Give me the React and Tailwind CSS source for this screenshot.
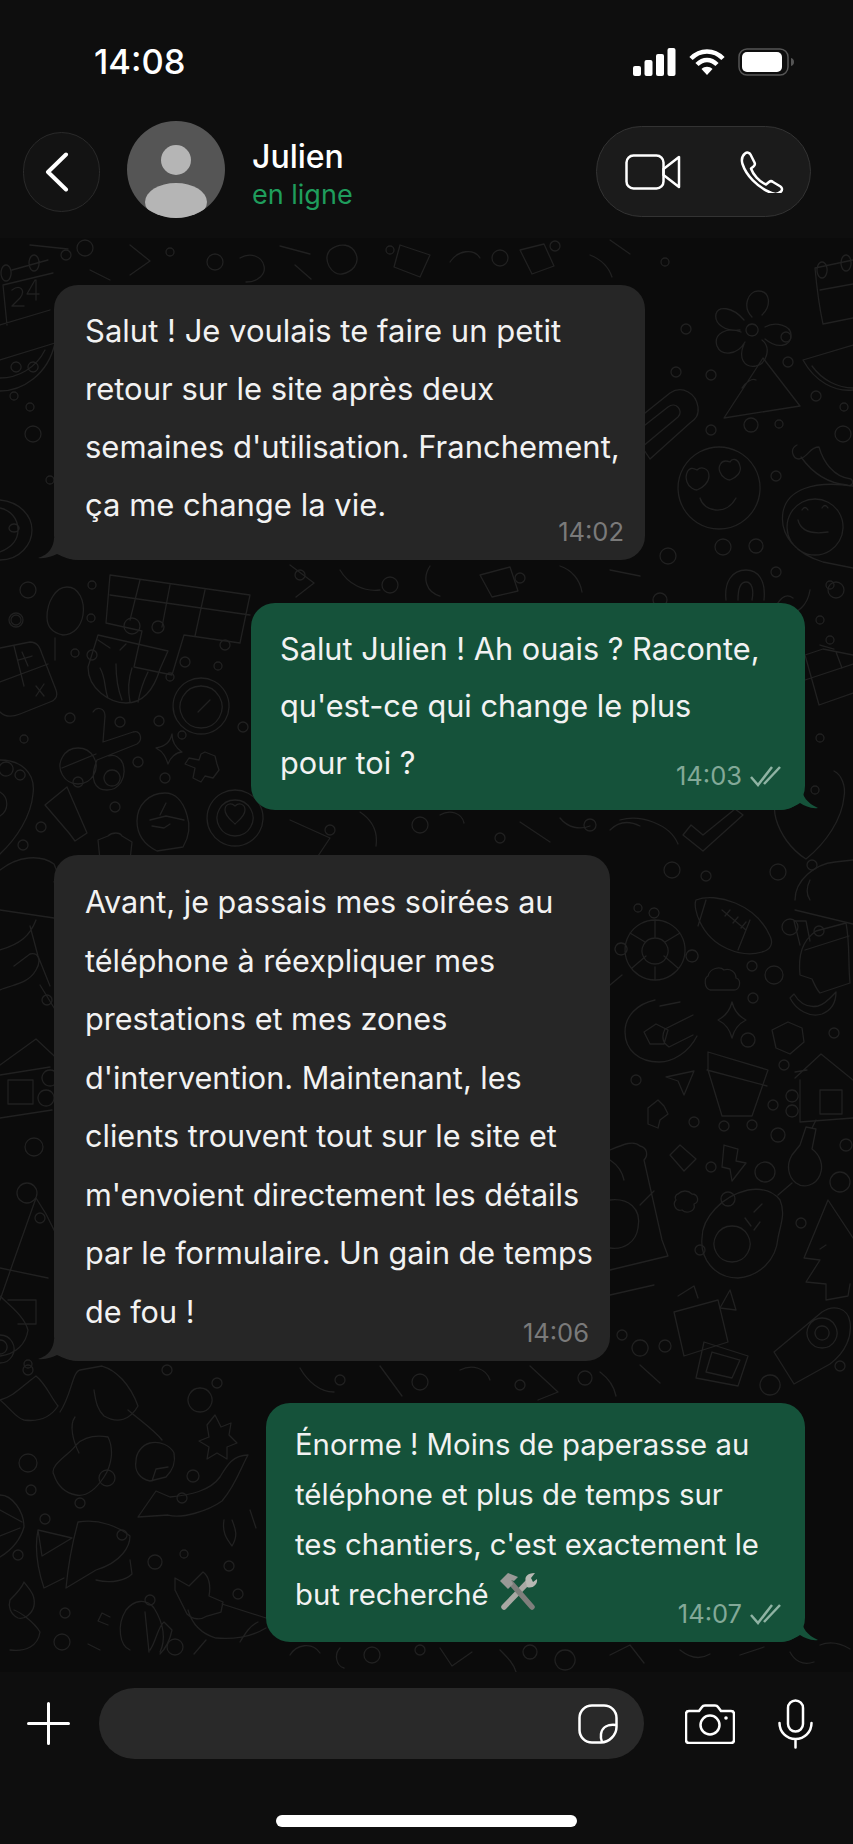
import React from 'react';

const font = "font-['Inter','Liberation_Sans',sans-serif]";

// little rings scattered between the doodles, page coordinates
const dots = [
    [66, 255, 5], [85, 248, 8], [170, 252, 4], [215, 262, 8], [390, 250, 4], [500, 258, 8], [555, 246, 5], [665, 262, 4],
    [686, 329, 5], [786, 337, 5], [676, 372, 5], [711, 375, 5], [788, 362, 5], [816, 396, 5], [844, 407, 4], [14, 396, 4], [30, 407, 4],
    [751, 425, 7], [779, 424, 4], [843, 434, 8], [711, 430, 5], [776, 476, 5], [33, 434, 8], [50, 480, 4],
    [723, 547, 8], [756, 546, 7], [776, 572, 5], [668, 556, 8], [660, 600, 7], [836, 590, 8], [820, 620, 4],
    [28, 590, 8], [16, 620, 5], [92, 585, 4], [91, 618, 4], [92, 655, 5], [132, 626, 8], [158, 627, 6], [225, 645, 5], [185, 662, 5], [218, 666, 4],
    [170, 677, 4], [16, 620, 7], [75, 653, 4], [24, 739, 4], [70, 718, 5], [120, 722, 5], [159, 721, 5], [138, 762, 5], [165, 778, 5], [243, 727, 5],
    [78, 782, 5], [41, 827, 5], [23, 845, 5], [115, 807, 5], [182, 735, 4], [830, 585, 4], [815, 790, 4], [812, 865, 5], [830, 640, 4], [820, 738, 4],
    [672, 870, 8], [706, 876, 5], [778, 872, 8], [638, 908, 4], [790, 927, 8], [819, 931, 5], [752, 966, 5], [774, 975, 9], [753, 998, 5], [748, 1040, 7], [834, 1033, 5], [784, 1065, 5],
    [636, 1080, 5], [773, 1105, 5], [694, 1122, 5], [724, 1126, 5], [752, 1125, 5], [778, 1135, 7], [846, 1145, 6], [711, 1167, 5], [765, 1172, 10], [840, 1182, 10],
    [728, 1199, 7], [700, 1250, 5], [801, 1223, 5], [622, 1335, 5], [665, 1346, 6], [840, 1366, 5], [47, 1000, 5], [34, 1147, 9], [27, 1193, 10], [40, 1218, 5], [28, 1370, 5],
    [28, 1364, 4], [167, 1370, 5], [217, 1383, 5], [28, 1463, 9], [107, 1478, 8], [31, 1490, 5], [80, 1503, 5], [193, 1476, 6], [182, 1498, 5], [45, 1519, 5], [122, 1535, 5], [184, 1554, 4],
    [155, 1562, 7], [229, 1566, 5], [150, 1600, 5], [65, 1613, 5], [62, 1642, 8], [175, 1647, 8], [238, 1594, 5], [18, 1555, 5], [420, 1650, 5], [372, 1655, 8], [530, 1652, 7],
    [340, 1380, 5], [420, 1382, 8], [520, 1385, 5], [585, 1378, 7], [330, 830, 5], [420, 825, 8], [500, 838, 5], [590, 825, 6], [300, 575, 5], [390, 585, 8], [520, 578, 5],
];

// line doodles, same coordinates as the page so they sit where the reference has them
const doodles = [
    // flower and party hat
    'M752 317c-10-10-4-26 6-26 12 0 14 14 4 24M740 330c-14 2-26-6-24-16 2-8 16-8 28 6M745 342c-8 14-24 14-28 4-4-12 10-20 24-14M762 340c10 8 4 24-6 26-12 2-18-8-12-22M765 327c10-6 26-2 26 8 0 12-14 14-26 4M752 324a6 6 0 1 0 .1 0',
    'M763 358l-39 60 76-12zM742 388c4-6 10-10 14-8',
    // watermelon, wraps across the right edge
    'M803 360c12 22 32 32 50 30M803 360l50-15M812 366c10 14 26 22 41 22',
    'M0 391c22 0 48-16 55-48M0 360l55-17M0 378c18 0 36-10 45-28M16 362a5 5 0 1 0 .1 0M33 362a5 5 0 1 0 .1 0',
    // cake with the 24
    'M815 268l38-8M815 268c2 22 4 38 8 56l30-6M820 290l33-6M822 262a5 8 0 1 0 .1 0M846 255a5 8 0 1 0 .1 0',
    'M0 325l50-15M7 325l-4-40 50-12M12 270l36-10M6 265a5 8 0 1 0 .1 0M34 255a5 8 0 1 0 .1 0M12 290c8-6 14 0 8 8l-8 8h12M35 280l-8 14h12M36 280v20',
    // magnet
    'M640 417l30-24c12-8 26 0 28 14 1 8-2 12-8 16l-40 36-8-12 36-30c6-6-2-16-10-10l-28 22z',
    // heart-eye smiley
    'M719 447a41 41 0 1 0 .1 0',
    'M697 470c-10-6-12 6-10 12 2 6 8 8 10 8 6-2 12-8 12-14 0-8-8-10-12-6zM730 462c-10-4-12 6-10 10 2 6 8 8 10 8 6-2 12-8 10-14-2-8-8-8-10-4z',
    'M700 498c4 14 26 18 36 0',
    // chili
    'M797 445c-8 4-4 14 2 14 10-2 10-12 20-12 4 14 14 30 32 32 4 4 0 8-4 6-22-2-36-14-46-28',
    // oval smiley and its big frame
    'M853 486c-40-6-66 4-70 26-4 24 14 42 40 50l30 6M815 499a28 28 0 1 0 .1 0M798 520q4 16 30 12M802 510q3-5 6 0M822 508q3-5 6 0',
    'M0 500c20 2 32 16 32 30s-12 30-32 30M0 508c10 2 18 10 18 22S10 548 0 552M14 524a5 4 0 1 0 .1 0',
    // lock and apple over green
    'M726 600c-2-18 6-30 20-30 12 0 20 10 18 30M738 600c0-10 2-18 8-18s8 8 6 18M775 608c4-8 10-16 18-10M810 590c-2 14-12 26-28 24',
    // grid of the crossword
    'M110 575l140 20-10 48-56-8-12 40-38-8 8-36-36-8zM140 580l-10 40M170 585l-8 42M205 590l-10 46M110 595l140 20',
    // spoon
    'M67 587c12 0 18 14 16 28-2 12-10 20-20 20-10-2-16-8-16-18 0-14 8-30 20-30zM55 638v22',
    // cross panel, left and right copies
    'M0 648l30-6c8 0 10 6 12 12l14 36c2 6 0 10-6 12l-30 12c-10 4-16 2-20-2M0 682l48-18M14 646l10 40M22 652l6 14M18 660l14-4M36 686l8 10M44 684l-8 12',
    'M853 655l-30-6-18 6 14 50 34-12M805 680l48-16M820 645l14 4M836 652l6 16',
    // cupcake with drips
    'M98 635l70 16-8 18c-6 20-16 34-34 34-16 0-38-14-38-36zM100 668c6 10 4 20 8 30M116 664c0 14 2 26 6 36M132 668c-4 12-4 24-2 34M148 672c-6 12-8 20-10 30M98 640l12 8M120 650l6-6',
    // gauge
    'M201 678a28 28 0 1 0 .1 0M201 686a21 21 0 1 0 .1 0M198 712l12-12',
    // wrench cross
    'M93 712c4-6 12-4 12 4l-2 26 30-10c8-2 10 8 4 12l-40 16c-8 20-2 30 10 30s20-12 16-26c-2-6-8-10-14-8M78 748a18 18 0 1 0 .1 0M62 768l34-14M112 770a8 8 0 1 0 .1 0',
    // four point star and jigsaw blob
    'M172 734c-2 8-6 12-16 14 8 4 10 10 12 16 2-6 8-12 14-12-6-4-10-10-10-18z',
    'M205 752l10 4 2 8 2 6-6 8-8-2-4 6-8-4 2-10-10-4 4-6 10 2 2-6z',
    // tube and lidded cup
    'M45 805l22-18 20 46-12 8-6-8z',
    'M100 860l-2-20 10-4c4-4 12-4 14 0l10 6-2 18z',
    // hipster head
    'M165 793c-16 0-28 12-28 28 0 14 8 24 20 30l26-4c6-10 8-20 4-32-4-14-12-22-22-22zM150 820l16-4 18 4M152 826l12 2 6-4M160 815l6-12',
    // ring with a heart
    'M235 790a28 28 0 1 0 .1 0M235 800a18 18 0 1 0 .1 0M235 806c-4-4-10-2-10 4 0 6 6 10 10 14 4-4 10-8 10-14 0-6-6-8-10-4z',
    // left heart with holes and right copy
    'M0 760c20 0 36 12 33 34-2 22-16 44-33 60M0 792a14 14 0 0 1 0 24M6 762a7 7 0 1 0 .1 0M20 770a5 5 0 1 0 .1 0',
    'M780 775c-4 10-8 30-4 44s14 30 30 40c20-16 36-40 38-62 2-10-2-22-10-26',
    // check mark
    'M683 835l20 16 40-36-8-6-32 26-12-10zM620 820c20-6 50 4 58 24',
    // top band bits
    'M330 250c10-8 22-6 26 4s-4 18-14 20-20-14-12-24zM400 245l30 10-10 22-26-10zM450 262c8-12 24-14 30-4M520 250l24-6 10 22-22 8zM590 255c10 4 18 10 22 22M610 240l20 14M30 245l38 4M90 270l20 10M130 245l20 16-20 14',
    'M240 258c10-6 22-2 24 8 2 8-6 16-18 16M280 246l30 8M295 265l16 14',
    // turtle
    'M655 920a30 30 0 1 0 .1 0M655 938a13 13 0 1 0 .1 0M655 920v18M655 967v13M630 933l15 9M680 933l-15 9M632 968l14-12M678 968l-14-12M621 943a6 6 0 1 0 .1 0M692 950a6 6 0 1 0 .1 0M622 975l-12 10M654 908a5 5 0 1 0 .1 0',
    // football
    'M696 900c20-8 60 4 74 36 4 8 0 14-8 16-20 6-50-4-62-30-4-8-6-18-4-22zM706 900l-8 26M750 920l-12 30M722 910l24 20M730 910l-5 6M738 917l-5 6M746 922l-5 6',
    // taco
    'M795 900c0-20 20-36 40-38l18-2M795 910l58 14M810 880c-4 8-4 14 0 20',
    // bottle bag with banana
    'M800 975c-2-20 2-34 16-44l30-8c4 20 2 40 4 60l-30 10c-4-4-6-10-8-14zM805 950l44-14M800 945l-6-24h12l4 20',
    'M790 998c6 12 20 20 32 16 10-4 14-12 14-22-4 4-10 12-18 14-10 2-18-2-24-12z',
    // comet cookie
    'M655 1000c-18 4-30 16-30 32 0 18 14 30 34 30 14 0 30-10 38-26M680 1002l-20 4M693 1015l-28 14c-4 8-2 14 4 18l24-12M644 1032l12-8 12 6-4 14h-14z',
    // cloud and gem
    'M708 976c2-8 12-10 16-6 6-2 12 2 12 8 6 2 4 12-2 12h-24c-6-2-6-12-2-14z',
    'M732 1002c2 8 6 14 14 18-8 4-12 10-14 18-2-8-6-14-14-18 8-4 12-10 14-18z',
    'M772 1030l16-8 14 6 2 14-14 12-14-6z',
    // flower pot
    'M708 1052l60 18-16 46h-30l-14-46zM707 1070l60 16',
    // house
    'M795 1078l26-24 32 26M800 1080v42l53-4M792 1090a6 6 0 1 0 .1 0M792 1105a6 6 0 1 0 .1 0M820 1090h22v24h-22zM795 1072l12-2',
    'M0 1065l36-26 30 28M0 1075l50-8M8 1080h25v24H8zM50 1070a8 8 0 1 0 .1 0M46 1090a8 8 0 1 0 .1 0M0 1118l52-8',
    // paper plane, stars, bolts
    'M666 1077l28-6-10 24-6-14zM648 1108l10-8 6 6 4 8-8 6-2 8-10-4z',
    'M724 1145l14 4-2 12 10 2-14 18-2-12-8-2z',
    'M680 1145l16 14-12 12-14-16z',
    'M678 1194c4-4 10-4 14 0 6 0 8 8 2 10 2 8-8 10-12 6-6 2-10-6-6-10-2-2 0-6 2-6z',
    // maraca
    'M800 1145l6-18 10 2-4 20c8 6 12 16 8 26s-16 14-24 8-10-18-4-28zM812 1128l4-8',
    // avocado
    'M780 1200c6 14 0 26-2 38-2 22-18 38-40 40-24 0-38-20-36-40 0-20 20-42 46-48 12-2 24 0 32 10zM732 1226a18 18 0 1 0 .1 0M745 1218l6 8M760 1222l-6 8M754 1212l8-8M778 1195l14-12',
    // fir tree
    'M828 1200l-24 58 16 2-14 22 20 2v16l22-4 2-12M828 1200l25 38M826 1245l-6 4',
    'M0 1300l14-40 22-62 10 16 12 24M0 1268l48 10M8 1300h28v24H18',
    // big bear book
    'M610 1150c14-6 24-10 30-4 8 2 8 10 4 14l18 80 6 16-58 14M610 1200c18-2 32 8 28 28-2 14-14 22-28 20M610 1160c6 4 12 10 14 20M640 1205l14 -14',
    'M0 870c18-14 40-16 54-6l4 10-4 8 4 2M0 910l54 8M0 950c20-6 30-14 36-30M0 990c14-6 28-6 36-20 6-10 2-18-6-16l-16 12M30 926l8 30 12 30M40 985l16 26',
    // rockets and gift squares
    'M774 1352l48-40c12-8 26-4 28 10 2 14-4 30-20 42l-36 20zM822 1318a15 15 0 1 0 .1 0M822 1326a7 7 0 1 0 .1 0M770 1375a10 10 0 1 0 .1 0',
    'M674 1312l44-12 10 42-44 14zM704 1342l44 14-10 30-42-8zM712 1352l28 8-8 18-26-6z',
    'M610 1295l44-10M678 1296l16-10 4 12M730 1290l-10 18 16 2zM640 1340a8 8 0 1 0 .1 0',
    'M0 1335a14 14 0 1 0 .1 0M0 1340a7 7 0 1 0 .1 0M0 1296c10 10 24 20 28 34-2 14-12 24-28 26',
    // whale, shoes, cocktail, cactus and cat of the lower left corner
    'M0 1400c14-4 20-12 36-24 10 8 14 20 22 30-8 12-20 16-34 14-8-2-12-10-24-20zM60 1412c12-18 12-40 20-42l22-4c14 4 28 18 36 40-8 14-20 18-34 10-6-6-8-12-10-26M54 1475c-6-10 18-22 22-30 8-8 20-10 32-8 6 12 4 28-4 40-8 12-18 20-28 18-10-2-18-8-22-20z',
    'M75 1417c-6 8-2 24 4 36M128 1410c14 12 26 20 34 30',
    'M150 1443c10-2 20 2 24 10 2 10-2 18-8 24l-16 4c-10-2-16-10-14-20 0-8 6-16 14-18zM152 1481l4-12 12-2',
    'M215 1415l6 12 10-4-2 12 8 8-10 4v12l-10-6-10 6 2-12-10-6 10-4-2-12zM200 1388a12 12 0 1 0 .1 0',
    'M248 1455c-6 10-12 30-26 46-14 10-40 18-54 14l-30 2 18-26 14 6c20-2 40-6 50-20 6-10 12-22 28-22zM232 1520c4 10 6 16 0 26-6-8-10-14-8-26M250 1510l6 18',
    'M0 1495c12 0 24 16 24 32-4 14-14 24-24 30M0 1510l22 12M0 1536l20-8',
    'M38 1530l34 8-30 18zM38 1530c-4 20 0 40 6 58l20-10M78 1522c-6 22-10 44-12 66l30-18c26-8 34-24 34-34-10-8-30-18-52-14zM96 1580c16 4 30 0 36-6l-2-14',
    'M10 1600c6-6 12-12 14-18 4 6 12 12 10 24-2 8-10 14-16 12-8-4-10-12-8-18zM14 1610c6 2 20 12 26 22-2 14-14 20-30 18',
    'M130 1650c-10-4-14-24-4-40 8-10 20-12 28-2 10 16 12 32 6 44M108 1625l-10-4 4-8 8 4M145 1612l4 40M150 1650c6-8 8-24 14-28l8 8c-2 10-6 18-12 24M100 1650l-12-6',
    'M175 1578l14 8 14-14c6 4 8 14 6 24l14 6 -2 10-14 4c-6 4-14 4-20-2l-12-24zM188 1610c4 14 14 24 28 28 24 2 40-4 50-10M222 1604l44 14M240 1642c6-10 10-16 18-20M206 1640l-12 14',
    // low band under the last bubble
    'M290 1655c6-10 22-14 30-2M340 1648c-6 6-4 18 4 20M440 1648l12 18 20-14M500 1650c8 8 14 14 16 22M565 1650a10 10 0 1 0 .1 0M610 1655l20-10 14 18M680 1650c10 8 20 10 30 4M740 1655l24-8M790 1652c4 8 12 14 24 10M820 1645c10-4 20-2 30 4',
    // gaps between bubbles
    'M290 820l40 18-12 18M360 812c12 8 18 20 16 34M440 815c10-6 22-2 24 8M520 822l30 20M560 818c8 10 20 12 30 8M610 830c8-8 18-10 30-4',
    'M290 565l24 18-18 14M340 570c8 14 24 22 40 20M430 566c-8 12-4 26 10 30M480 575l30-8 8 24-26 6zM560 566c12 4 20 14 22 26M610 570l30 6',
    'M300 1368c8 14 20 24 34 24M380 1366l22 30M460 1370c12-6 26-2 30 10M530 1366l28 26-20 8M600 1372c8 6 14 14 16 24M640 1365l20 18',
];

// doodle wallpaper behind the messages
const Doodles = () => (
    <svg className="absolute inset-0 w-full h-full" viewBox="0 238 853 1434" preserveAspectRatio="none" fill="none" stroke="#212121" strokeWidth="1.3" strokeLinecap="round" strokeLinejoin="round">
        {dots.map(([x, y, r], i) => (
            <circle key={i} cx={x} cy={y} r={r} />
        ))}
        {doodles.map((d, i) => (
            <path key={i} d={d} />
        ))}
    </svg>
);

const StatusBar = () => (
    <div className="h-[121px] pl-[94px] pr-[58px] pt-[42px] flex items-start justify-between">
        <span className={`${font} text-[34.500px] leading-[40px] font-medium text-white`}>14:08</span>
        <div className="flex items-center gap-[13px] h-[40px]">
            <svg width="43" height="28" viewBox="0 0 43 28" fill="#fff">
                <rect x="0" y="18" width="8" height="10" rx="2" />
                <rect x="11.5" y="12" width="8" height="16" rx="2" />
                <rect x="23" y="6" width="8" height="22" rx="2" />
                <rect x="34.5" y="0" width="8" height="28" rx="2" />
            </svg>
            <svg width="36" height="28" viewBox="0 0 36 28" fill="none" stroke="#fff" strokeWidth="4.5">
                <path d="M2 10.5c9-9.5 23-9.5 32 0" />
                <path d="M8 16.5c6-6 14-6 20 0" />
                <path d="M18 27l-5.500-6c3-3 8-3 11 0z" fill="#fff" stroke="none" />
            </svg>
            <svg width="57" height="28" viewBox="0 0 57 28" fill="none">
                <rect x="1" y="1" width="49" height="26" rx="8" stroke="#555" strokeWidth="1.500" />
                <rect x="4" y="4" width="40" height="20" rx="5" fill="#fff" />
                <path d="M53 10c2 .5 3 2 3 4s-1 3.500-3 4z" fill="#555" />
            </svg>
        </div>
    </div>
);

const ChatHeader = () => (
    <div className="h-[117px] pl-[23px] pr-[42px] flex items-start bg-[#0e0e0e]">
        <div className="w-[77px] h-[80px] mt-[11px] rounded-full border border-[#2a2a2a] bg-[#131313] flex items-center justify-center">
            <svg className="-ml-[10px]" width="24" height="40" viewBox="0 0 24 40" fill="none" stroke="#fff" strokeWidth="4" strokeLinecap="round" strokeLinejoin="round">
                <path d="M21 2.500L3 20l18 17.500" />
            </svg>
        </div>
        <div className="w-[98px] h-[97px] ml-[27px] rounded-full bg-[#555555] overflow-hidden">
            <svg width="98" height="97" viewBox="0 0 98 97" fill="#b5b5b5">
                <ellipse cx="49" cy="39" rx="15" ry="15" />
                <ellipse cx="49" cy="81" rx="31" ry="19" />
            </svg>
        </div>
        <div className={`${font} ml-[27px] mt-[18px] flex flex-col`}>
            <span className="text-[32px] leading-[36px] font-medium text-white">Julien</span>
            <span className="text-[27px] leading-[36px] text-[#1f9d5c] mt-[2px]">en ligne</span>
        </div>
        <div className="ml-auto mt-[5px] w-[215px] h-[91px] rounded-full border border-[#333333] bg-[#1b1b1b] flex items-center pl-[28px]">
            <svg width="56" height="36" viewBox="0 0 56 36" fill="none" stroke="#fff" strokeWidth="2.500" strokeLinejoin="round">
                <rect x="1.500" y="1.500" width="37" height="33" rx="7" />
                <path d="M38.500 15L54 3v30L38.500 21z" />
            </svg>
            <svg className="ml-[59px]" width="44" height="42" viewBox="0 0 44 42" fill="none" stroke="#fff" strokeWidth="2.500" strokeLinejoin="round">
                <path d="M5 2.500c2-1.500 4.500-1 5.500 1l4 8c.7 1.500.3 3-1 4l-2.500 2c2 6 8 13 15 16l3-2.500c1.200-1 2.800-1 4 0l7.500 4.500c1.800 1.200 2 3.500.5 5-2.500 2.500-6 3-9.500 1.500C17 36 6 24 2.500 13 1.300 9 2 5 5 2.500z" />
            </svg>
        </div>
    </div>
);

const Tail = ({ side, color }) => (
    side === 'left' ? (
        <svg className="absolute left-[-16px] bottom-0" width="40" height="22" viewBox="0 0 40 22" fill={color}>
            <path d="M16 0C16 8 11 17 0 20c8 1 14-2 19-4 6 3 14 6 21 6V0z" />
        </svg>
    ) : (
        <svg className="absolute right-[-13px] bottom-0" width="40" height="22" viewBox="0 0 40 22" fill={color}>
            <path d="M24 0c0 8 5 15 16 20-7 1-13-2-18-5-6 4-14 7-22 7V0z" />
        </svg>
    )
);

const Checks = () => (
    <svg width="33" height="22" viewBox="0 0 33 22" fill="none" stroke="#8fb3a3" strokeWidth="2.500">
        <path d="M2 12l7 8L23 2" />
        <path d="M15 19L31 2" />
    </svg>
);

const Tools = () => (
    <svg className="inline-block align-[-7px] ml-[1px]" width="40" height="40" viewBox="0 0 40 40">
        <path d="M6 35L31 9" stroke="#a8a8a3" strokeWidth="5.500" strokeLinecap="round" />
        <path d="M28 10c-2-5 1-9 9-9l-4 5 2 4 4-3c1 6-5 10-10 8z" fill="#b8b8b3" />
        <path d="M34 35L13 11" stroke="#7f7f7c" strokeWidth="5.500" strokeLinecap="round" />
        <path d="M2 9l8-8 10 4-4 4-3-1 2 4-5 5z" fill="#999996" />
    </svg>
);

const Bubble = ({ mine, lines, time, className, text, timeBottom = 'bottom-[13px]' }) => {
    const color = mine ? '#15523a' : '#262626';
    return (
        <div className={`relative rounded-[24px] ${mine ? 'bg-[#15523a] self-end' : 'bg-[#262626] self-start'} ${className}`}>
            <div className={`${font} text-[#f2f2f2] ${text}`}>
                {lines.map((line, i) => (
                    <div key={i} className="whitespace-nowrap">{line}</div>
                ))}
            </div>
            <div className={`${font} absolute ${mine ? 'right-[23px]' : 'right-[21px]'} ${timeBottom} flex items-center gap-[7px] text-[25.500px] leading-[30px] ${mine ? 'text-[#83a998]' : 'text-[#7a7a7a]'}`}>
                <span>{time}</span>
                {mine && <Checks />}
            </div>
            <Tail side={mine ? 'right' : 'left'} color={color} />
        </div>
    );
};

const Composer = () => (
    <div className="h-[172px] bg-[#0e0e0e] flex flex-col">
        <div className="flex items-center h-[71px] mt-[16px] pl-[27px]">
            <svg width="43" height="43" viewBox="0 0 43 43" stroke="#fff" strokeWidth="3" strokeLinecap="round">
                <path d="M21.500 1.500v40M1.500 21.500h40" />
            </svg>
            <div className="w-[545px] h-[71px] ml-[29px] rounded-full bg-[#292929] flex items-center justify-end pr-[26px]">
                <svg width="40" height="40" viewBox="0 0 40 40" fill="none" stroke="#fff" strokeWidth="2.500" strokeLinejoin="round">
                    <path d="M14 1.500h12C33 1.500 38.500 7 38.500 14v9C38.500 31 31 38.500 23 38.500h-9C7 38.500 1.500 33 1.500 26V14C1.500 7 7 1.500 14 1.500z" />
                    <path d="M38 21c-8-1-14 2-15 9-.4 3 0 6 1 8" />
                </svg>
            </div>
            <svg className="ml-[41px]" width="50" height="40" viewBox="0 0 50 40" fill="none" stroke="#fff" strokeWidth="2.500" strokeLinejoin="round">
                <path d="M4 7h10l3-4c.6-1 1.500-1.500 3-1.500h10c1.500 0 2.400.5 3 1.500l3 4h10c1.700 0 3 1.300 3 3v26c0 1.700-1.300 3-3 3H4c-1.700 0-3-1.300-3-3V10c0-1.700 1.300-3 3-3z" />
                <circle cx="25" cy="21" r="9.500" />
                <circle cx="41" cy="14" r="1.800" fill="#fff" stroke="none" />
            </svg>
            <svg className="ml-[43px]" width="35" height="50" viewBox="0 0 35 50" fill="none" stroke="#fff" strokeWidth="2.500" strokeLinecap="round">
                <rect x="10" y="1.500" width="15" height="31" rx="7.500" />
                <path d="M1.500 24c0 9 7 16 16 16s16-7 16-16M17.500 40v8.500" />
            </svg>
        </div>
        <div className="w-[301px] h-[12px] mt-[56px] mx-auto rounded-full bg-white" />
    </div>
);

export default function App() {
    return (
        <div className="w-[853px] h-[1844px] bg-[#0e0e0e] flex flex-col overflow-hidden">
            <StatusBar />
            <ChatHeader />
            <main className="relative flex-1 bg-[#0b0b0b]">
                <Doodles />
                <div className="relative flex flex-col pt-[47px] pl-[54px] pr-[48px]">
                    <Bubble
                        lines={['Salut ! Je voulais te faire un petit', 'retour sur le site après deux', "semaines d'utilisation. Franchement,", 'ça me change la vie.']}
                        time="14:02"
                        className="w-[591px] h-[275px] pl-[31px] pt-[17px]"
                        text="text-[31px] leading-[58px]"
                    />
                    <Bubble
                        mine
                        lines={['Salut Julien ! Ah ouais ? Raconte,', "qu'est-ce qui change le plus", 'pour toi ?']}
                        time="14:03"
                        className="w-[554px] h-[207px] mt-[43px] pl-[29px] pt-[17px]"
                        text="text-[30.700px] leading-[57px]"
                        timeBottom="bottom-[19px]"
                    />
                    <Bubble
                        lines={['Avant, je passais mes soirées au', 'téléphone à réexpliquer mes', 'prestations et mes zones', "d'intervention. Maintenant, les", 'clients trouvent tout sur le site et', "m'envoient directement les détails", 'par le formulaire. Un gain de temps', 'de fou !']}
                        time="14:06"
                        className="w-[556px] h-[506px] mt-[45px] pl-[31px] pt-[18px]"
                        text="text-[30.600px] leading-[58.500px]"
                    />
                    <Bubble
                        mine
                        lines={['Énorme ! Moins de paperasse au', 'téléphone et plus de temps sur', "tes chantiers, c'est exactement le", <>but recherché <Tools /></>]}
                        time="14:07"
                        className="w-[539px] h-[239px] mt-[42px] pl-[29px] pt-[17px]"
                        text="text-[29.300px] leading-[50px]"
                    />
                </div>
            </main>
            <Composer />
        </div>
    );
}
